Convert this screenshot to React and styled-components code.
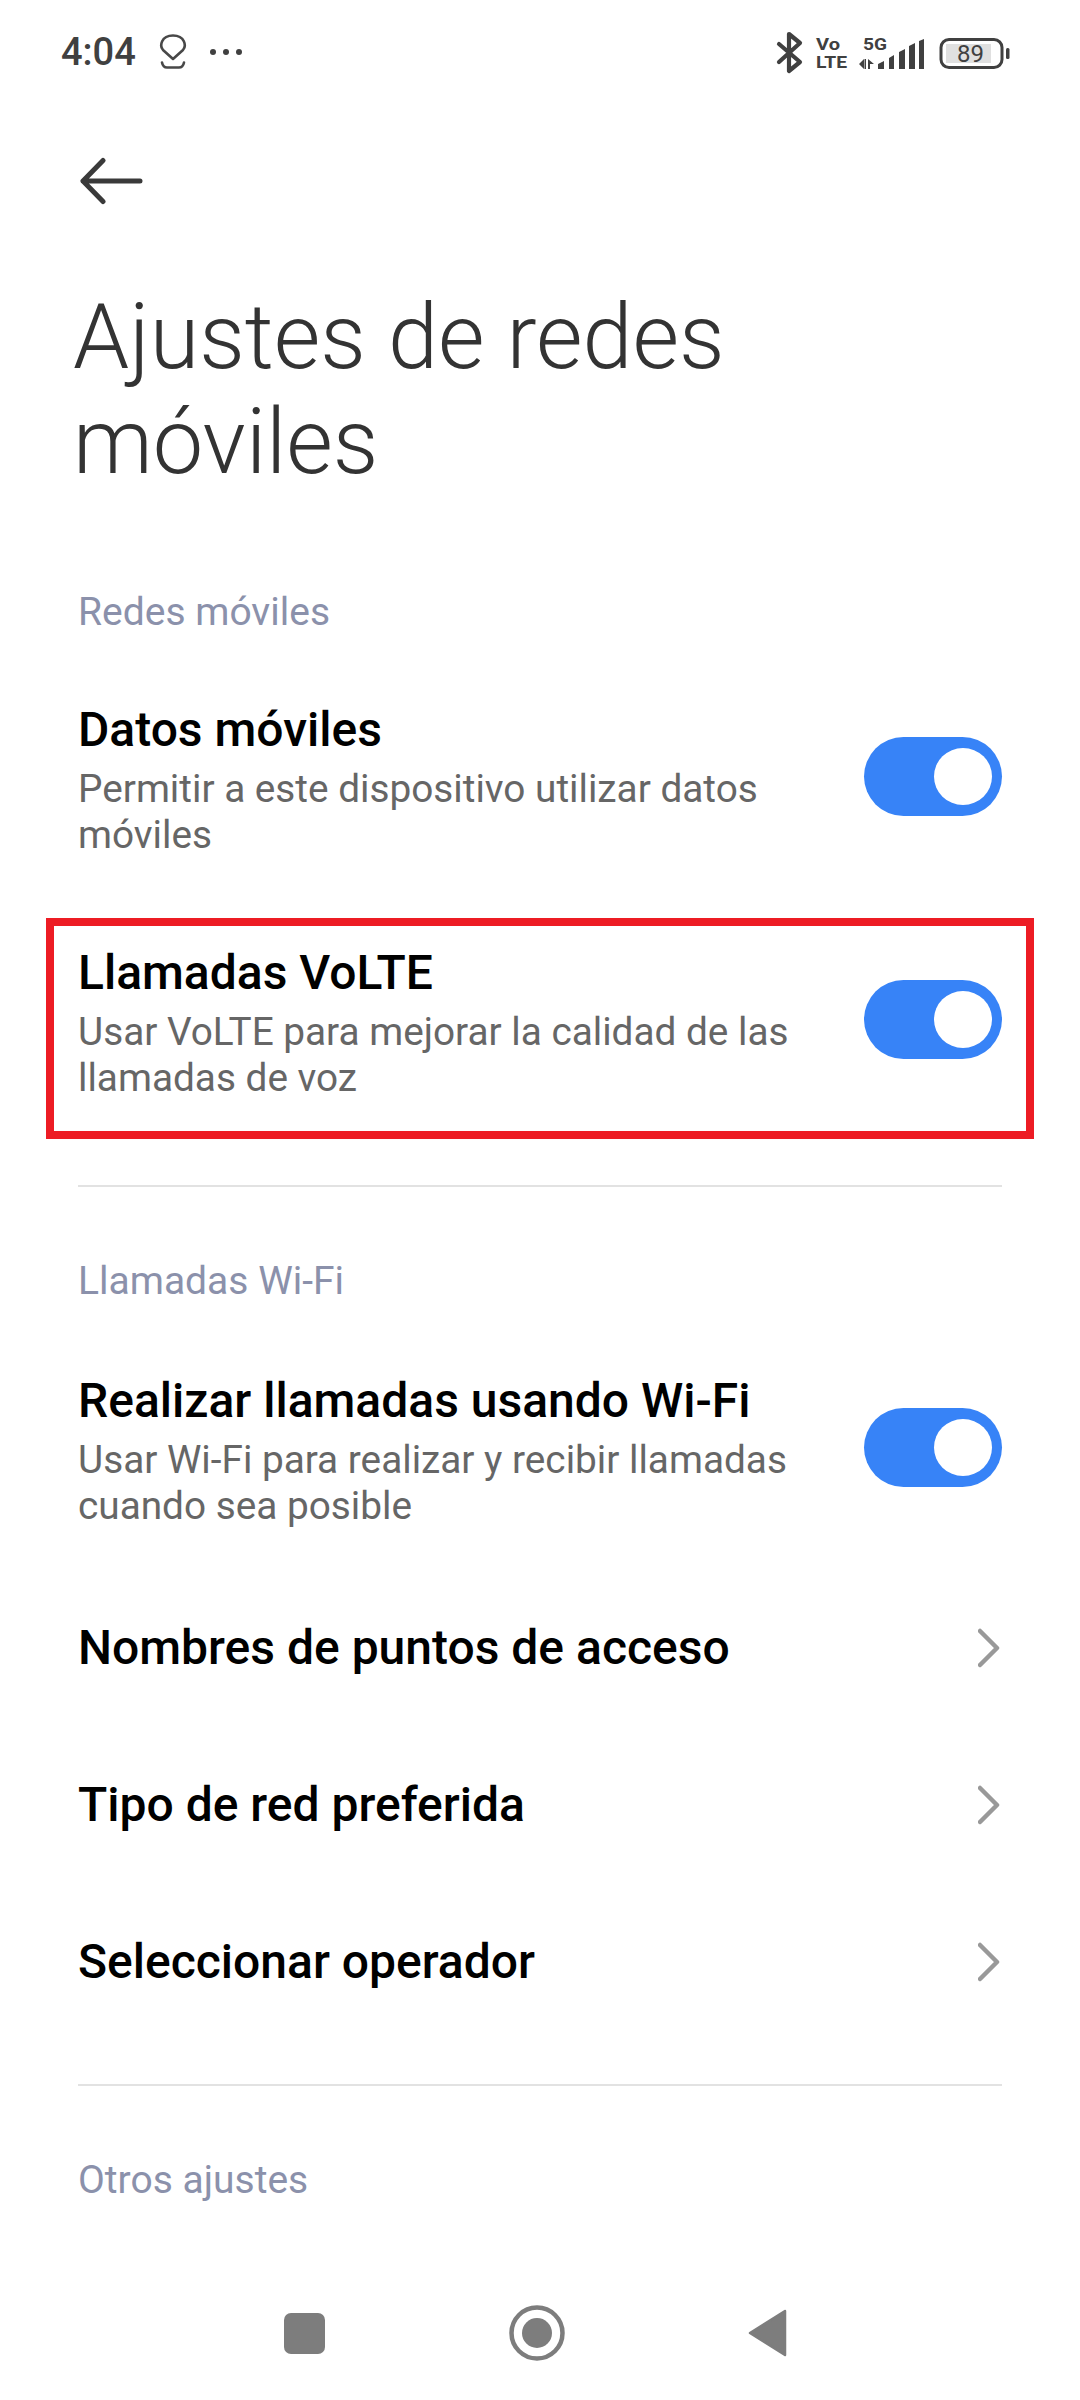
import React from "react";
import styled, { createGlobalStyle } from "styled-components";

const Global = createGlobalStyle`
  html, body { margin: 0; padding: 0; background: #fff; }
  body { font-family: Roboto, "Liberation Sans", sans-serif; }
`;

const Page = styled.div`
  width: 1080px;
  height: 2400px;
  display: flex;
  flex-direction: column;
  background: #fff;
  overflow: hidden;
`;

const StatusBar = styled.div`
  height: 104px;
  display: flex;
  align-items: center;
  justify-content: space-between;
  padding: 0 70px 0 61px;
  box-sizing: border-box;
  color: #404040;
`;

const StatusLeft = styled.div`
  display: flex;
  align-items: center;
  gap: 23px;
`;

const Clock = styled.span`
  font-size: 38px;
  font-weight: 500;
  line-height: 1;
`;

const BackBar = styled.div`
  height: 154px;
  padding: 0 0 0 80px;
  display: flex;
  align-items: center;
  box-sizing: border-box;
`;

const Title = styled.h1`
  margin: 27px 0 0;
  padding: 0 300px 0 73px;
  font-size: 90px;
  font-weight: 300;
  line-height: 105px;
  color: #333;
  height: 246px;
  box-sizing: border-box;
`;

const Section = styled.div`
  height: ${(p) => p.$h}px;
  padding: ${(p) => p.$top}px 78px 0;
  box-sizing: border-box;
  font-size: 39px;
  line-height: 46px;
  color: #8b91ab;
`;

const Row = styled.div`
  position: relative;
  height: ${(p) => (p.$tall ? 243 : 157)}px;
  padding: 0 78px;
  box-sizing: border-box;
  display: flex;
  align-items: center;
  justify-content: space-between;
`;

const RowText = styled.div`
  display: flex;
  flex-direction: column;
  gap: 8px;
  width: 730px;
  padding-top: 6px;
`;

const RowTitle = styled.div`
  font-size: 48px;
  font-weight: 500;
  line-height: 56px;
  color: #000;
`;

const RowSub = styled.div`
  font-size: 38.75px;
  line-height: 46px;
  color: #666;
`;

const Toggle = styled.div`
  width: 138px;
  height: 79px;
  border-radius: 40px;
  background: #3783f7;
  display: flex;
  align-items: center;
  justify-content: flex-end;
  padding-right: 10px;
  box-sizing: border-box;
`;

const Knob = styled.div`
  width: 58px;
  height: 57px;
  border-radius: 50%;
  background: #fff;
`;

const Highlight = styled.div`
  position: absolute;
  left: 46px;
  right: 46px;
  top: 20px;
  bottom: 2px;
  border: 8px solid #ed1c24;
  box-sizing: border-box;
  pointer-events: none;
`;

const Divider = styled.div`
  height: 2px;
  background: #e2e2e2;
  margin: 44px 78px 0;
`;

const NavBar = styled.div`
  margin-top: auto;
  height: 134px;
  display: flex;
  align-items: center;
  padding: 0 0 0 284px;
  box-sizing: border-box;
`;

const NavSlot = styled.div`
  width: ${(p) => p.$w}px;
  display: flex;
`;

const Arrow = () => (
  <svg width="64" height="48" viewBox="0 0 64 48" fill="none" stroke="#3a3a3a" strokeWidth="5" strokeLinecap="round" strokeLinejoin="round">
    <path d="M3 24H60M23 3.5 3 24 23 44.5" />
  </svg>
);

const Chevron = () => (
  <svg width="24" height="42" viewBox="0 0 24 42" fill="none" stroke="#999" strokeWidth="4.5" strokeLinecap="round" strokeLinejoin="round">
    <path d="M2 4 19 21 2 38" />
  </svg>
);

const PinIcon = () => (
  <svg width="28" height="36" viewBox="0 0 28 36" fill="none" stroke="#484848" strokeWidth="2.6" strokeLinecap="round" strokeLinejoin="round">
    <path d="M14 25 4 16C.5 12 2 1.5 14 1.5 26 1.5 27.5 12 24 16Z" />
    <path d="M3 28.5Q4 33.5 8 33.5H20Q24 33.5 25 28.5" />
  </svg>
);

const Dots = () => (
  <svg width="32" height="10" viewBox="0 0 32 10" fill="#404040">
    <circle cx="3" cy="5" r="3" />
    <circle cx="16" cy="5" r="3" />
    <circle cx="29" cy="5" r="3" />
  </svg>
);

const StatusIcons = () => (
  <svg width="236" height="44" viewBox="775 28 236 44" fill="#404040" fontFamily="Roboto, sans-serif">
    <path d="M780 42 801 60 790 69V32L801 41 780 60" fill="none" stroke="#404040" strokeWidth="4.2" strokeLinejoin="round" strokeLinecap="round" />
    <text x="817" y="48" fontSize="17" fontWeight="700" textLength="24" lengthAdjust="spacingAndGlyphs">Vo</text>
    <text x="817" y="66" fontSize="16" fontWeight="700" textLength="31" lengthAdjust="spacingAndGlyphs">LTE</text>
    <text x="864" y="48" fontSize="17" fontWeight="700" textLength="24" lengthAdjust="spacingAndGlyphs">5G</text>
    <path d="M860 62 865 57V67ZM867 57V67H865.5V57ZM869 57 875 62H871V67H869Z" />
    <path d="M879 62 885 59V67H879ZM890 56 895 53V67H890ZM900 50 906 47V67H900ZM910 44 916 41V67H910ZM920 39 925 37V67H920Z" />
    <rect x="942" y="37.5" width="61" height="28" rx="8" fill="none" stroke="#404040" strokeWidth="3" />
    <rect x="947" y="42" width="45" height="19" fill="#e0e0e0" />
    <rect x="1007" y="46" width="3.5" height="11" rx="1.5" />
    <text x="958" y="60" fontSize="24">89</text>
  </svg>
);

const SquareIcon = () => (
  <svg width="41" height="41" viewBox="0 0 41 41">
    <rect width="41" height="41" rx="7" fill="#7d7d7d" />
  </svg>
);

const HomeIcon = () => (
  <svg width="56" height="56" viewBox="0 0 56 56">
    <circle cx="28" cy="28" r="25.5" fill="none" stroke="#7d7d7d" strokeWidth="4.5" />
    <circle cx="28" cy="28" r="15" fill="#7d7d7d" />
  </svg>
);

const BackIcon = () => (
  <svg width="40" height="48" viewBox="0 0 40 48">
    <path d="M37 2 2 24 37 46Z" fill="#7d7d7d" stroke="#7d7d7d" strokeWidth="2.5" strokeLinejoin="round" />
  </svg>
);

const ToggleRow = ({ title, sub, marked }) => (
  <Row $tall>
    <RowText>
      <RowTitle>{title}</RowTitle>
      <RowSub>{sub}</RowSub>
    </RowText>
    <Toggle>
      <Knob />
    </Toggle>
    {marked && <Highlight />}
  </Row>
);

const LinkRow = ({ title }) => (
  <Row>
    <RowTitle>{title}</RowTitle>
    <Chevron />
  </Row>
);

export default function App() {
  return (
    <Page>
      <Global />
      <StatusBar>
        <StatusLeft>
          <Clock>4:04</Clock>
          <PinIcon />
          <Dots />
        </StatusLeft>
        <StatusIcons />
      </StatusBar>
      <BackBar>
        <Arrow />
      </BackBar>
      <Title>Ajustes de redes móviles</Title>
      <Section $top={58} $h={124}>Redes móviles</Section>
      <ToggleRow title="Datos móviles" sub="Permitir a este dispositivo utilizar datos móviles" />
      <ToggleRow marked title="Llamadas VoLTE" sub="Usar VoLTE para mejorar la calidad de las llamadas de voz" />
      <Divider />
      <Section $top={71} $h={139}>Llamadas Wi-Fi</Section>
      <ToggleRow title="Realizar llamadas usando Wi-Fi" sub="Usar Wi-Fi para realizar y recibir llamadas cuando sea posible" />
      <LinkRow title="Nombres de puntos de acceso" />
      <LinkRow title="Tipo de red preferida" />
      <LinkRow title="Seleccionar operador" />
      <Divider />
      <Section $top={71} $h={124}>Otros ajustes</Section>
      <NavBar>
        <NavSlot $w={225}><SquareIcon /></NavSlot>
        <NavSlot $w={239}><HomeIcon /></NavSlot>
        <NavSlot $w={40}><BackIcon /></NavSlot>
      </NavBar>
    </Page>
  );
}
